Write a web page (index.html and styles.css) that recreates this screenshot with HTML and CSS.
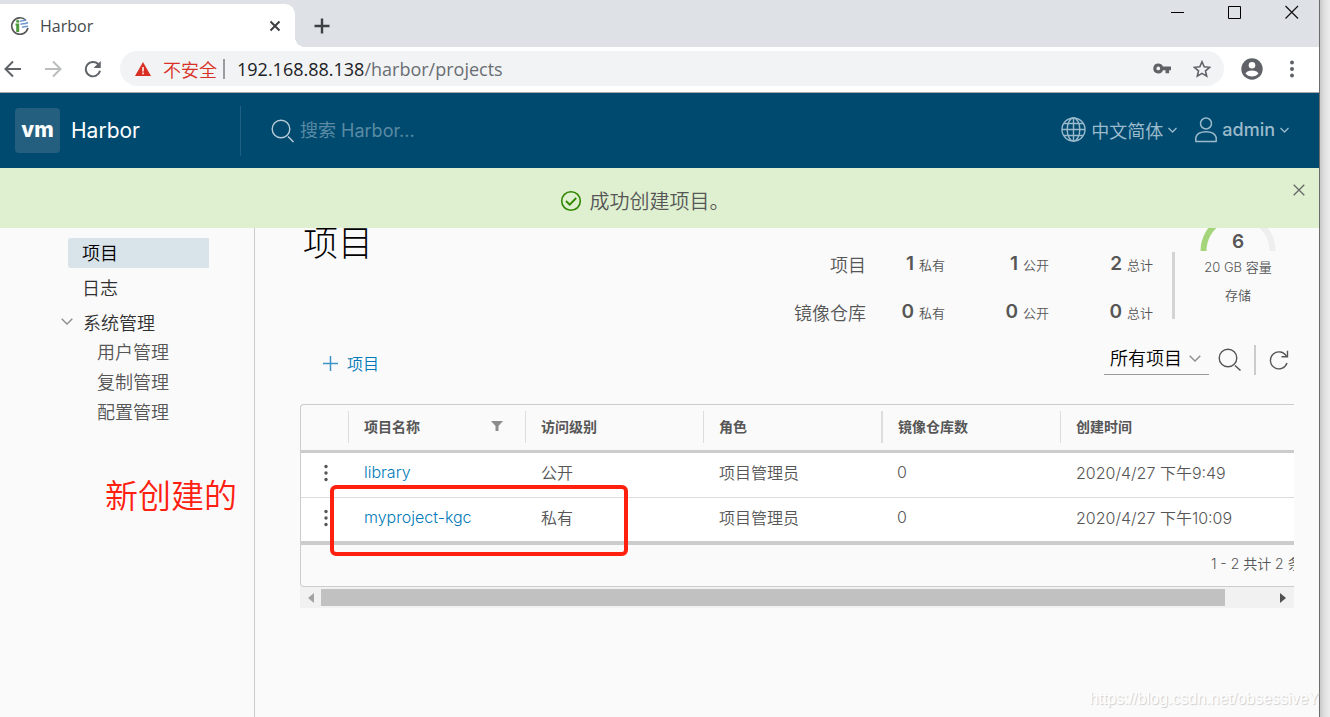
FILE: index.html
```html
<!DOCTYPE html>
<html lang="zh-CN">
<head>
<meta charset="utf-8">
<title>Harbor</title>
<link rel="stylesheet" href="styles.css">
</head>
<body>
<div class="window">
  <div class="tabstrip">
    <div class="tab">
      <svg class="favicon" width="20" height="20" viewBox="0 0 20 20"><path d="M16 4.500A8.200 8.200 0 1 0 17.900 12" fill="none" stroke="#555" stroke-width="1.600"/><path d="M5.500 7.500h3.700v8.500H6.200V9.500h-.7z" fill="#4f9a3c"/><circle cx="7.700" cy="5.300" r="1.500" fill="#4f9a3c"/><path d="M10 5.500c2-2 3 .5 6-2M10.500 8.500c2-2 3.500.5 7.500-2M12 11.500c1.500-1.500 3 0 6-1.500" stroke="#6e9bd0" stroke-width="1.500" fill="none"/></svg>
      <span class="tab-title">Harbor</span>
      <button class="plain" aria-label="Close tab"><svg width="12" height="12" viewBox="0 0 12 12"><path d="M1.500 1.500l9 9M10.500 1.500l-9 9" stroke="#3c4043" stroke-width="2"/></svg></button>
    </div>
    <span class="tab-curve"></span>
    <button class="plain new-tab" aria-label="New tab"><svg width="16" height="16" viewBox="0 0 16 16"><path d="M8 .5v15M.5 8h15" stroke="#3c4043" stroke-width="2.400"/></svg></button>
    <div class="window-controls">
      <button class="plain" aria-label="Minimize"><svg width="14" height="14" viewBox="0 0 14 14"><path d="M0 7.500h13" stroke="#000"/></svg></button>
      <button class="plain" aria-label="Maximize"><svg width="14" height="14" viewBox="0 0 14 14"><path d="M.5 1.500h12v12h-12z" stroke="#000" fill="none"/></svg></button>
      <button class="plain" aria-label="Close"><svg width="14" height="14" viewBox="0 0 14 14"><path d="M.5 1l12.500 12.500M13 1L.5 13.500" stroke="#111" stroke-width="1.200"/></svg></button>
    </div>
  </div>

  <div class="toolbar">
    <button class="plain" aria-label="Back"><svg width="18" height="18" viewBox="0 0 18 18"><path d="M17 9H2M9 1.500L1.500 9 9 16.500" stroke="#5f6368" stroke-width="2" fill="none"/></svg></button>
    <button class="plain" aria-label="Forward"><svg width="18" height="18" viewBox="0 0 18 18"><path d="M1 9h15M9 1.500L16.500 9 9 16.500" stroke="#babcbe" stroke-width="2" fill="none"/></svg></button>
    <button class="plain" aria-label="Reload"><svg width="18" height="18" viewBox="0 0 20 20"><path d="M16.300 5.200A8 8 0 1 0 17.800 12" stroke="#5f6368" stroke-width="2.200" fill="none"/><path d="M18.600 1v8h-8z" fill="#5f6368"/></svg></button>
    <div class="address">
      <svg width="16" height="14" viewBox="0 0 16 14"><path d="M8 0l8 14H0z" fill="#d93025"/><path d="M8 5v4.500M8 10.500v1.700" stroke="#fff" stroke-width="1.500"/></svg>
      <span class="insecure">不安全</span>
      <span class="address-rule"></span>
      <span class="url"><span class="host">192.168.88.138</span>/harbor/projects</span>
      <button class="plain key" aria-label="Passwords"><svg width="18" height="11" viewBox="0 0 18 11"><path d="M5.300.4a5 5 0 1 0 4.700 6.800h2.500v3h3.600v-3H18V3.600h-8A5 5 0 0 0 5.300.4zm0 3.200a1.800 1.800 0 1 1 0 3.700 1.800 1.800 0 0 1 0-3.700z" fill="#5f6368" fill-rule="evenodd"/></svg></button>
      <button class="plain" aria-label="Bookmark"><svg width="18" height="18" viewBox="0 0 18 18"><path d="M9 1.800l2.200 5 5.400.5-4.100 3.600 1.200 5.300L9 13.400l-4.700 2.800 1.200-5.300-4.100-3.600 5.400-.5z" stroke="#5f6368" stroke-width="1.600" fill="none"/></svg></button>
    </div>
    <button class="plain" aria-label="Profile"><svg width="22" height="22" viewBox="0 0 22 22"><circle cx="11" cy="11" r="10.700" fill="#5f6368"/><circle cx="11" cy="7.200" r="3.300" fill="#fff"/><path d="M4.500 15.500c1.500-4 11.500-4 13 0-2.800 3.900-10.200 3.900-13 0z" fill="#fff"/></svg></button>
    <button class="plain menu" aria-label="Menu"><svg width="6" height="18" viewBox="0 0 6 18"><g fill="#5f6368"><circle cx="3" cy="2.500" r="2"/><circle cx="3" cy="9" r="2"/><circle cx="3" cy="15.500" r="2"/></g></svg></button>
  </div>

  <header class="header">
    <a class="brand" href="#"><span class="logo">vm</span><span>Harbor</span></a>
    <label class="search">
      <svg width="24" height="24" viewBox="0 0 24 24"><circle cx="10" cy="10" r="8.800" stroke="#b5cad5" stroke-width="1.400" fill="none"/><path d="M17 17.500l5.500 5.500" stroke="#b5cad5" stroke-width="1.600"/></svg>
      <input type="search" placeholder="搜索 Harbor..." aria-label="搜索 Harbor">
    </label>
    <button class="plain nav language">
      <svg width="25" height="25" viewBox="0 0 25 25"><g stroke="#9bbacb" stroke-width="1.400" fill="none"><circle cx="12.500" cy="12.500" r="11.500"/><ellipse cx="12.500" cy="12.500" rx="6.300" ry="11.500"/><path d="M12.500 1v23M1 12.500h23M3 6.500h19M3 18.500h19"/></g></svg>
      <span>中文简体</span>
      <svg class="caret" width="9" height="6" viewBox="0 0 9 6"><path d="M.5 1l4 4 4-4" stroke="#9bbacb" stroke-width="1.300" fill="none"/></svg>
    </button>
    <button class="plain nav user">
      <svg width="22" height="26" viewBox="0 0 22 26"><g stroke="#9bbacb" stroke-width="1.500" fill="none"><circle cx="11" cy="6.500" r="5.500"/><path d="M.8 24.500v-4c2.200-7.800 18.200-7.800 20.400 0v4z" stroke-linejoin="round"/></g></svg>
      <span class="user-name">admin</span>
      <svg class="caret" width="9" height="6" viewBox="0 0 9 6"><path d="M.5 1l4 4 4-4" stroke="#9bbacb" stroke-width="1.300" fill="none"/></svg>
    </button>
  </header>

  <div class="alert" role="status">
    <svg width="22" height="22" viewBox="0 0 22 22"><circle cx="11" cy="11" r="9.300" stroke="#318700" stroke-width="1.600" fill="none"/><path d="M6 11l3.700 3.700L16.200 8" stroke="#318700" stroke-width="1.800" fill="none"/></svg>
    <span>成功创建项目。</span>
    <button class="plain alert-close" aria-label="关闭"><svg width="12" height="12" viewBox="0 0 12 12"><path d="M.7.7l10.600 10.600M11.300.7L.7 11.300" stroke="#666" stroke-width="1.300"/></svg></button>
  </div>

  <div class="body">
    <nav class="sidebar">
      <a class="item active" href="#">项目</a>
      <a class="item" href="#">日志</a>
      <button class="plain item group"><svg width="12" height="7" viewBox="0 0 12 7"><path d="M.7.7L6 6l5.300-5.300" stroke="#8c8c8c" stroke-width="1.300" fill="none"/></svg>系统管理</button>
      <a class="subitem" href="#">用户管理</a>
      <a class="subitem" href="#">复制管理</a>
      <a class="subitem" href="#">配置管理</a>
    </nav>

    <main class="main">
      <div class="summary">
        <h1>项目</h1>
        <div class="stats">
          <span class="stat-label">项目</span>
          <span class="stat"><b>1</b>私有</span>
          <span class="stat"><b>1</b>公开</span>
          <span class="stat"><b>2</b>总计</span>
          <span class="stat-label">镜像仓库</span>
          <span class="stat"><b>0</b>私有</span>
          <span class="stat"><b>0</b>公开</span>
          <span class="stat"><b>0</b>总计</span>
        </div>
        <div class="storage">
          <div class="gauge">
            <svg width="76" height="23" viewBox="0 15 76 23"><path d="M35 3.500A34.500 34.500 0 0 1 72.500 38" stroke="#eee" stroke-width="6" fill="none"/><path d="M3.500 38A34.500 34.500 0 0 1 20 8.500" stroke="#a5d57a" stroke-width="6" fill="none"/></svg>
            <b>6</b>
          </div>
          <span>20 GB 容量</span>
          <span>存储</span>
        </div>
      </div>

      <div class="actions">
        <button class="plain add"><svg width="15" height="15" viewBox="0 0 15 15"><path d="M7.500 0v15M0 7.500h15" stroke="#3d94c4" stroke-width="1.500"/></svg>项目</button>
        <div class="filter">
          <select aria-label="项目范围"><option>所有项目</option></select>
          <svg width="12" height="7" viewBox="0 0 12 7"><path d="M.7.7L6 6l5.300-5.300" stroke="#8c8c8c" stroke-width="1.300" fill="none"/></svg>
        </div>
        <button class="plain find" aria-label="搜索"><svg width="24" height="24" viewBox="0 0 24 24"><circle cx="10" cy="10" r="8.800" stroke="#565656" stroke-width="1.400" fill="none"/><path d="M17 17.500l5.500 5" stroke="#565656" stroke-width="1.600"/></svg></button>
        <span class="action-rule"></span>
        <button class="plain refresh" aria-label="刷新"><svg width="20" height="20" viewBox="0 0 20 20"><path d="M17.500 6.500A8.500 8.500 0 1 0 18 13M12.500 6.700h6V.8" stroke="#565656" stroke-width="1.400" fill="none"/></svg></button>
      </div>

      <div class="grid">
        <table>
          <colgroup><col class="c-menu"><col class="c-name"><col class="c-data"><col class="c-data"><col class="c-count"><col></colgroup>
          <thead>
            <tr>
              <th></th>
              <th><div class="head">项目名称<svg width="12" height="10" viewBox="0 0 12 10"><path d="M0 0h12L7.500 5v5h-3V5z" fill="#8c8c8c"/></svg></div></th>
              <th><div class="head">访问级别</div></th>
              <th><div class="head">角色</div></th>
              <th><div class="head wide-rule">镜像仓库数</div></th>
              <th><div class="head">创建时间</div></th>
            </tr>
          </thead>
          <tbody>
            <tr>
              <td class="row-menu"><button class="plain" aria-label="操作 library"><svg width="4" height="18" viewBox="0 0 4 18"><g fill="#565656"><circle cx="2" cy="2.500" r="1.700"/><circle cx="2" cy="9" r="1.700"/><circle cx="2" cy="15.500" r="1.700"/></g></svg></button></td>
              <td><a href="#">library</a></td><td>公开</td><td>项目管理员</td><td>0</td><td>2020/4/27 下午9:49</td>
            </tr>
            <tr>
              <td class="row-menu"><button class="plain" aria-label="操作 myproject-kgc"><svg width="4" height="18" viewBox="0 0 4 18"><g fill="#565656"><circle cx="2" cy="2.500" r="1.700"/><circle cx="2" cy="9" r="1.700"/><circle cx="2" cy="15.500" r="1.700"/></g></svg></button></td>
              <td><a href="#">myproject-kgc</a></td><td>私有</td><td>项目管理员</td><td>0</td><td>2020/4/27 下午10:09</td>
            </tr>
          </tbody>
        </table>
        <div class="grid-foot">1 - 2 共计 2 条</div>
      </div>
      <div class="scrollbar">
        <svg width="6" height="10" viewBox="0 0 6 10"><path d="M6 0v10L0 5z" fill="#a3a3a3"/></svg>
        <span class="track"><span class="thumb"></span></span>
        <svg width="6" height="10" viewBox="0 0 6 10"><path d="M0 0v10l6-5z" fill="#505050"/></svg>
      </div>
      <span class="mark"></span>
    </main>
    <span class="note">新创建的</span>
    <span class="watermark">https://blog.csdn.net/obsessiveY</span>
  </div>
</div>
</body>
</html>
```
FILE: styles.css
```css
* { box-sizing: border-box; }

body {
  margin: 0;
  display: flex;
  min-height: 100vh;
  padding-right: 10px;
  background: linear-gradient(to left, #ededed, #dedede 6px, #c9c9c9 10px);
  color: #565656;
  font-family: Inter, "Noto Sans CJK SC", sans-serif;
  font-size: 16px;
  overflow: hidden;
}

a { text-decoration: none; color: #0079b8; }

svg { display: block; flex: none; }

.plain {
  border: 0;
  padding: 0;
  background: none;
  color: inherit;
  font: inherit;
  display: flex;
  align-items: center;
}

.window {
  flex: 1;
  min-width: 0;
  display: flex;
  flex-direction: column;
  background: #fafafa;
  border-right: 1px solid #6b6b6b;
}

/* Browser frame */
.tabstrip {
  display: flex;
  align-items: flex-end;
  height: 47px;
  background: #dee1e6;
  font-family: "Open Sans", sans-serif;
}

.tab {
  display: flex;
  align-items: center;
  width: 295px;
  height: 43px;
  padding: 0 14px 0 10px;
  background: #fff;
  border-radius: 0 10px 0 0;
}

.tab-title { flex: 1; margin-left: 10px; color: #45494d; }

.tab-curve {
  width: 10px;
  height: 10px;
  background: radial-gradient(circle at 10px 0, #dee1e6 10px, #fff 10px);
}

.new-tab { align-self: center; margin: 4px 0 0 9px; }

.window-controls {
  align-self: flex-start;
  display: flex;
  gap: 43px;
  margin-left: auto;
  padding: 5px 20px 0 0;
}

.toolbar {
  display: flex;
  align-items: center;
  gap: 22px;
  height: 46px;
  padding: 0 24px 2px 4px;
  background: #fff;
  border-bottom: 1px solid #a9a9a9;
}

.address {
  flex: 1;
  display: flex;
  align-items: center;
  height: 35px;
  margin-right: -5px;
  margin-left: -4px;
  padding: 0 13px 0 15px;
  border-radius: 18px;
  background: #f1f3f4;
  font-family: "Open Sans", "Noto Sans CJK SC", sans-serif;
  font-size: 18px;
}

.insecure { margin-left: 12px; color: #d93025; font-weight: 350; }

.address-rule { width: 2px; height: 20px; margin: 0 12px 0 6px; background: #9a9c9f; }

.url { color: #6a6e73; }
.host { color: #202124; }
.key { margin: 0 22px 0 auto; }
.menu { margin-left: 4px; }

/* Application header */
.header {
  display: flex;
  align-items: center;
  height: 75px;
  padding: 0 30px 0 15px;
  background: #004a70;
  color: #9bbacb;
  font-size: 18px;
}

.brand {
  display: flex;
  align-items: center;
  gap: 11px;
  width: 226px;
  height: 50px;
  border-right: 1px solid #1f6083;
  color: #fff;
  font-size: 21px;
}

.logo {
  display: flex;
  align-items: center;
  justify-content: center;
  width: 45px;
  height: 45px;
  padding-bottom: 2px;
  border-radius: 4px;
  background: #245f80;
  font-weight: 800;
}

.search { flex: 1; display: flex; align-items: center; gap: 5px; margin-left: 30px; }

.search input {
  flex: 1;
  border: 0;
  padding: 0;
  background: none;
  color: #fff;
  font: inherit;
}

.search input::placeholder { color: #5a8aa3; }

.nav { gap: 5px; padding-bottom: 2px; }
.user { margin-left: 18px; }
.user-name { font-weight: 500; }

/* Success message */
.alert {
  position: relative;
  display: flex;
  align-items: center;
  justify-content: center;
  gap: 8px;
  height: 60px;
  padding: 5px 30px 0 0;
  background: #dff0d0;
  font-size: 20px;
  font-weight: 350;
}

.alert-close { position: absolute; top: 16px; right: 14px; }

/* Page body */
.body { position: relative; flex: 1; display: flex; }

.sidebar {
  width: 255px;
  padding: 10px 45px 0 68px;
  border-right: 1px solid #ccc;
  font-size: 18px;
}

.sidebar a, .sidebar button { font-weight: 350; }

.sidebar .item {
  display: flex;
  align-items: center;
  height: 30px;
  margin-bottom: 5px;
  padding: 0 0 3px 14px;
  color: #313131;
}

.sidebar .active { background: #d9e4ea; border-radius: 3px 0 0 3px; color: #000; }

.sidebar .group { gap: 10px; margin: 0 0 0 -7px; padding-left: 0; }

.sidebar .subitem { display: block; line-height: 30px; padding-left: 29px; color: #565656; }

.main { position: relative; flex: 1; min-width: 0; padding: 0 25px 0 45px; }

.summary { display: flex; height: 108px; }

h1 {
  flex: 1;
  margin: 0;
  padding-left: 3px;
  color: #000;
  font-size: 35px;
  font-weight: 300;
  line-height: 30px;
}

.stats {
  display: grid;
  grid-template-columns: auto 79px 104px 104px;
  grid-template-rows: 48px 48px;
  align-items: center;
  align-content: start;
  padding-top: 11px;
  text-align: right;
}

.stat-label { padding-top: 2px; font-size: 18px; font-weight: 350; }
.stat { font-size: 13px; font-weight: 350; }
.stat b { margin-right: 5px; font-size: 19px; font-weight: 600; }

.storage {
  display: flex;
  flex-direction: column;
  align-items: center;
  margin: 0 18px 0 19px;
  padding-left: 28px;
  font-size: 13px;
  font-weight: 350;
  line-height: 28px;
  background: linear-gradient(#d4d4d4, #d4d4d4) 0 24px / 3px 67px no-repeat;
}

.gauge { display: grid; justify-items: center; height: 25px; }
.gauge svg, .gauge b { grid-area: 1 / 1; }
.gauge b { font-size: 19px; font-weight: 600; line-height: 28px; }

.actions { display: flex; align-items: center; height: 48px; margin-bottom: 20px; }

.add { gap: 9px; margin: 6px auto 0 23px; color: #0079b8; font-weight: 350; }

.filter {
  display: flex;
  align-items: center;
  width: 105px;
  height: 29px;
  padding: 0 8px 3px 0;
  border-bottom: 1px solid #9a9a9a;
}

.filter select {
  flex: 1;
  min-width: 0;
  appearance: none;
  border: 0;
  padding: 0 0 0 6px;
  background: none;
  color: #000;
  font: inherit;
  font-size: 18px;
  font-weight: 350;
}

.find { margin-left: 9px; }
.action-rule { width: 2px; height: 30px; margin: 0 13px 0 12px; background: #ccc; }
.refresh { margin-right: 5px; }

/* Project table */
.grid {
  overflow: hidden;
  border: 1px solid #ccc;
  border-right: 0;
  border-radius: 4px 0 0 4px;
}

table { width: 105%; table-layout: fixed; border-collapse: collapse; }

.c-menu { width: 47px; }
.c-name { width: 177px; }
.c-data { width: 178px; }
.c-count { width: 179px; }

th { height: 46px; padding: 0; text-align: left; font-size: 14px; font-weight: 600; }
thead { border-bottom: 3px solid #ccc; }

.head {
  display: flex;
  align-items: center;
  justify-content: space-between;
  height: 32px;
  padding: 0 22px 3px 15px;
  border-left: 1px solid #ddd;
}

.wide-rule { border-left-width: 2px; }

tbody { background: #fff; border-bottom: 4px solid #ccc; }
tbody tr + tr { border-top: 1px solid #ddd; }
td { height: 46px; padding: 0 0 5px 16px; font-weight: 350; }
.row-menu { padding: 0 0 3px 23px; }

.grid-foot {
  width: 105%;
  height: 41px;
  padding-right: 42px;
  font-size: 14px;
  font-weight: 350;
  line-height: 38px;
  text-align: right;
}

.scrollbar {
  display: flex;
  align-items: center;
  gap: 7px;
  height: 21px;
  padding: 0 8px;
  background: #f1f1f1;
}

.track { flex: 1; }
.thumb { display: block; width: 95%; height: 17px; background: #c1c1c1; }

/* Annotations drawn over the page */
.mark {
  position: absolute;
  left: 75px;
  top: 257px;
  width: 298px;
  height: 71px;
  border: 4px solid #ff2010;
  border-radius: 6px;
}

.note {
  position: absolute;
  left: 105px;
  top: 244px;
  color: #ff2010;
  font-size: 33px;
  font-weight: 350;
  line-height: 48px;
}

.watermark {
  position: absolute;
  right: 0;
  bottom: 9px;
  color: #fff;
  font-family: "Liberation Sans", sans-serif;
  font-size: 16px;
  text-shadow: 1px 1px 1px #ccc;
}
```
